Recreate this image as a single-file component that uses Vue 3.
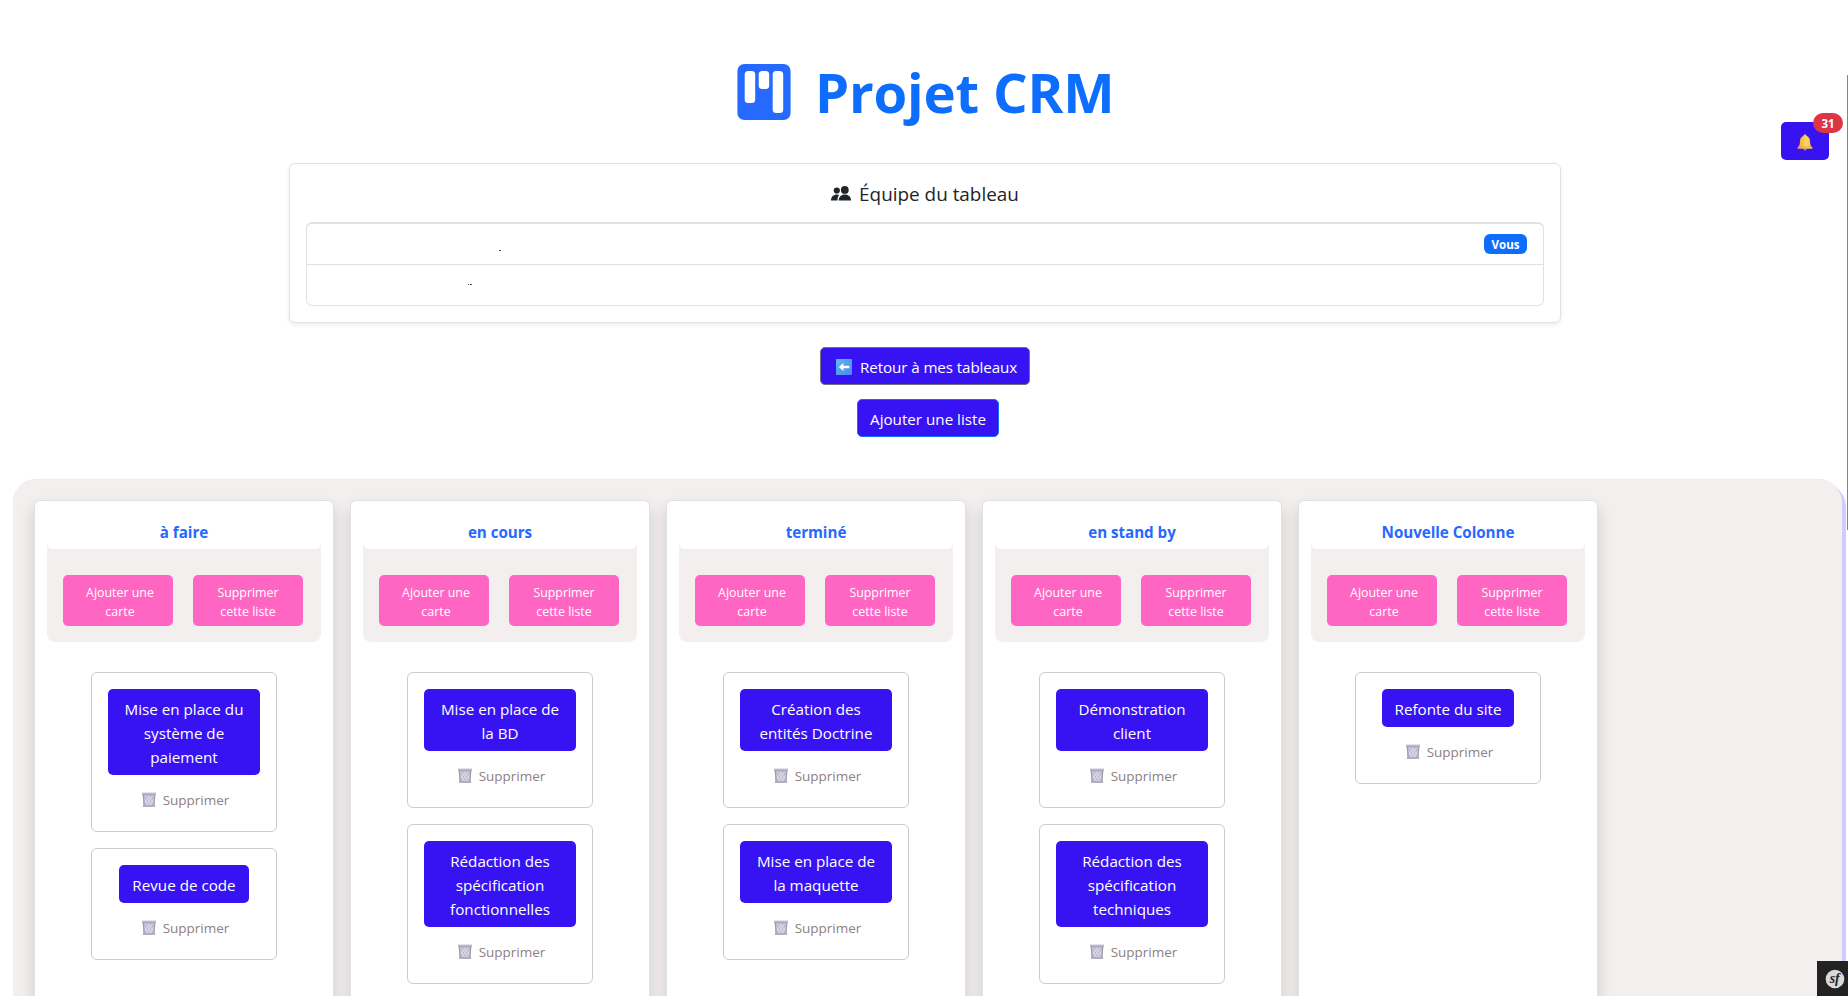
<script setup>
const columns = [
  { title: 'à faire', cards: [['Mise en place du', 'système de', 'paiement'], ['Revue de code']] },
  { title: 'en cours', cards: [['Mise en place de', 'la BD'], ['Rédaction des', 'spécification', 'fonctionnelles']] },
  { title: 'terminé', cards: [['Création des', 'entités Doctrine'], ['Mise en place de', 'la maquette']] },
  { title: 'en stand by', cards: [['Démonstration', 'client'], ['Rédaction des', 'spécification', 'techniques']] },
  { title: 'Nouvelle Colonne', cards: [['Refonte du site']] },
]
</script>

<template>
  <div class="page">
    <header class="hero">
      <svg class="logo" viewBox="0 0 54 56">
        <rect x=".4" width="53.2" height="56" rx="7" fill="#2669ff" />
        <rect x="7.700" y="7" width="10.500" height="32" rx="3.500" fill="#fff" />
        <rect x="21.700" y="7" width="10.500" height="18" rx="3.500" fill="#fff" />
        <rect x="35.700" y="7" width="10.500" height="42" rx="3.500" fill="#fff" />
      </svg>
      <h1>Projet CRM</h1>
    </header>

    <section class="team">
      <h2>
        <svg class="people" viewBox="0 0 20 15" fill="#212529">
          <circle cx="5.8" cy="4.5" r="3.1" />
          <circle cx="13.8" cy="3.9" r="3.9" />
          <path d="M0 14.5C0 10.800 2.600 8.600 5.800 8.600C6.900 8.600 7.700 8.800 8.200 9.100C7 10.400 6.500 12 6.500 14.500Z" />
          <path d="M7.700 14.500C7.700 10.900 10.400 8.600 13.800 8.600C17.400 8.600 20 10.900 20 14.500Z" />
        </svg>
        <span>Équipe du tableau</span>
      </h2>
      <ul class="members">
        <li><i class="speck one"></i><span class="you">Vous</span></li>
        <li><i class="speck two"></i><i class="speck three"></i></li>
      </ul>
    </section>

    <div class="actions">
      <button class="btn back">
        <svg class="arrow" viewBox="0 0 16 16">
          <defs>
            <linearGradient id="sky" x1="0" y1="0" x2="1" y2="1">
              <stop offset="0" stop-color="#5fb8f8" /><stop offset="1" stop-color="#4689e8" />
            </linearGradient>
          </defs>
          <rect width="16" height="16" rx="1" fill="url(#sky)" />
          <path d="M2.800 8L7.400 4V6.800H13.300V9.200H7.400V12Z" fill="#fff" />
        </svg>
        <span>Retour à mes tableaux</span>
      </button>
      <button class="btn add"><span>Ajouter une liste</span></button>
    </div>

    <main class="board">
      <section v-for="col in columns" :key="col.title" class="column">
        <div class="head">
          <h3>{{ col.title }}</h3>
          <div class="tools">
            <button class="pink first">Ajouter une<br />carte</button>
            <button class="pink">Supprimer<br />cette liste</button>
          </div>
        </div>
        <article v-for="card in col.cards" :key="card.join()" class="card">
          <button class="task" :class="{ wide: card.length > 1 }">
            <span v-for="line in card" :key="line">{{ line }}</span>
          </button>
          <div class="remove">
            <svg class="trash" viewBox="0 0 14 15">
              <path d="M.6 2H13.400L12.600 14H1.400Z" fill="#bdb9cc" />
              <path d="M1.200 3L2.200 13M12.800 3L11.800 13" stroke="#a29cb4" stroke-width="1.100" />
              <path d="M3.500 4L10 13M6.500 4L11.500 11M2.800 7L6.500 13M10.500 4L4 13M7.500 4L2.800 10.500M11.500 7L7.500 13" stroke="#eae8f2" stroke-width=".7" />
              <rect width="14" height="1.200" y=".3" fill="#dcdae4" />
              <rect width="14" height="1.200" y="1.400" fill="#a09bad" />
              <rect x=".8" width="12.400" height="1.400" y="13.400" fill="#a49eb4" />
            </svg>
            <span>Supprimer</span>
          </div>
        </article>
      </section>
    </main>

    <button class="bell">
      <svg viewBox="0 0 16 17">
        <defs>
          <linearGradient id="gold" x1="0" x2="1">
            <stop offset="0" stop-color="#f3a13c" /><stop offset=".6" stop-color="#ffd75a" /><stop offset="1" stop-color="#f6b73c" />
          </linearGradient>
        </defs>
        <path d="M8 .5C8.900 .5 9.500 1.100 9.600 1.900C11.800 2.700 12.900 4.500 13 7C13.100 9.800 13.500 11.300 14.800 13C15.500 13.800 15.800 14.300 15.400 14.800H.6C.2 14.300 .5 13.800 1.200 13C2.500 11.300 2.900 9.800 3 7C3.100 4.500 4.200 2.700 6.400 1.900C6.500 1.100 7.100 .5 8 .5Z" fill="url(#gold)" />
        <path d="M6.300 14.800H9.700C9.500 16 8.900 16.400 8 16.400S6.500 16 6.300 14.800Z" fill="#d98a45" />
        <path d="M2 13H14" stroke="#e9a13a" stroke-width=".7" />
      </svg>
      <span class="count">31</span>
    </button>
    <div class="scrollbar"></div>
    <div class="debug">
      <svg viewBox="0 0 20 20">
        <circle cx="10" cy="10" r="9.300" fill="#d9d9d9" />
        <text x="9.700" y="14" text-anchor="middle" class="sf">sf</text>
      </svg>
    </div>
  </div>
</template>

<style>
body { margin: 0; background: #fff; overflow: hidden; }
</style>

<style scoped>
* { box-sizing: border-box; }
.page { position: relative; width: 1848px; height: 996px; overflow: hidden; display: flex; flex-direction: column; font-family: "Open Sans", "Noto Sans", sans-serif; font-size: 15.200px; line-height: 24px; color: #212529; }
button { font: inherit; margin: 0; padding: 0; color: #fff; border: 0; white-space: nowrap; }
.hero { height: 163px; padding: 64px 0 0 737px; display: flex; gap: 24px; flex: none; }
.logo { width: 54px; height: 56px; flex: none; }
h1 { margin: -6px 0 0; font-size: 54.500px; line-height: 68px; font-weight: 700; color: #0d6efd; letter-spacing: -.2px; white-space: nowrap; }
.team { flex: none; width: 1272px; height: 160px; margin-left: 289px; border: 1px solid #dee2e6; border-radius: 6px; box-shadow: 0 2px 4px rgba(0, 0, 0, .075); padding: 18px 16px 0; }
h2 { margin: 0 0 16px; height: 24px; display: flex; justify-content: center; font-size: 18.900px; font-weight: 400; gap: 8px; white-space: nowrap; }
.people { width: 20px; height: 15px; margin-top: 4px; }
.members { list-style: none; margin: 0; padding: 0; height: 84px; border: 1px solid #dee2e6; border-top-width: 2px; border-radius: 6px; }
.members li { position: relative; height: 41px; display: flex; justify-content: flex-end; padding: 10px 16px 0; }
.members li:first-child { border-bottom: 1px solid #dee2e6; }
.you { width: 43px; height: 20px; border-radius: 6px; background: #0d6efd; color: #fff; font-size: 11.500px; font-weight: 700; line-height: 21px; text-align: center; }
.speck { position: absolute; height: 1px; background: #444; }
.one { left: 192px; top: 26px; width: 2px; }
.two { left: 161px; top: 19px; width: 1px; }
.three { left: 163px; top: 19px; width: 2px; }
.actions { flex: none; height: 156px; padding-top: 24px; display: flex; flex-direction: column; gap: 14px; }
.btn { height: 38px; border-radius: 5px; background: #3713f3; display: flex; padding-top: 7px; }
.back { width: 210px; margin-left: 820px; border: 1px solid #6c757d; padding-left: 15px; gap: 8px; letter-spacing: -.1px; }
.arrow { width: 16px; height: 16px; margin-top: 4px; }
.add { width: 142px; margin-left: 857px; border: 1px solid #0d6efd; justify-content: center; }
.board { flex: none; height: 600px; width: 1829px; margin-left: 13px; background: #f3efee; border-radius: 24px; box-shadow: 4px 4px 1px #ccf, 0 0 1px #dde0ff; padding: 21px; display: flex; gap: 16px; }
.column { width: 300px; height: 700px; flex: none; background: #fff; border: 1px solid #dee2e6; border-radius: 6px; box-shadow: 0 8px 16px rgba(0, 0, 0, .15); padding: 12px; display: flex; flex-direction: column; align-items: center; }
.head { width: 274px; height: 129px; background: #f3efee; border-radius: 8px; flex: none; margin-bottom: 30px; }
h3 { margin: 0; height: 36px; background: #fff; border-radius: 0 0 6px 6px; padding-top: 7px; text-align: center; font-size: 15.200px; line-height: 24px; font-weight: 700; color: #2669ff; letter-spacing: -.05px; }
.tools { padding: 26px 16px 0; display: flex; gap: 20px; }
.pink { width: 110px; height: 51px; padding-top: 3px; border-radius: 5px; background: #ff66c4; font-size: 12.400px; line-height: 19px; text-align: center; }
.first { padding-left: 4px; }
.card { width: 186px; flex: none; border: 1px solid #ccc; border-radius: 6px; padding: 16px; margin-bottom: 16px; display: flex; flex-direction: column; align-items: center; }
.task { padding: 8px 13px 6px; border-radius: 5px; background: #3713f3; display: flex; flex-direction: column; align-items: center; }
.wide { width: 152px; padding: 8px 0 6px; }
.remove { height: 40px; padding: 13px 0 0 3px; display: flex; gap: 7px; color: #8f8080; font-size: 13.500px; }
.trash { width: 14px; height: 15px; margin-top: 4px; }
.bell { position: absolute; left: 1781px; top: 122px; width: 48px; height: 38px; border-radius: 5px; background: #3713f3; }
.bell svg { position: absolute; left: 16px; top: 12px; width: 16px; height: 17px; }
.count { position: absolute; left: 32px; top: -9px; width: 30px; height: 20px; border-radius: 10px; background: #dc3545; font-size: 11.500px; font-weight: 700; line-height: 21px; text-align: center; }
.scrollbar { position: absolute; left: 1847px; top: 75px; width: 1px; height: 455px; background: #858585; }
.debug { position: absolute; left: 1817px; top: 961px; width: 31px; height: 35px; background: #222; }
.debug svg { position: absolute; left: 8px; top: 8px; width: 20px; height: 20px; }
.sf { font: italic bold 14px "Liberation Serif", serif; fill: #222; }
</style>
